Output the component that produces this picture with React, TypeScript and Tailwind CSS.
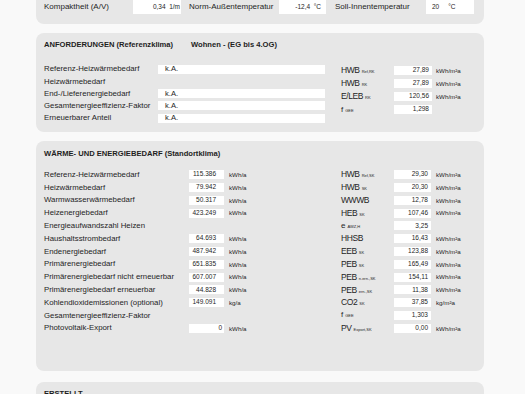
import React from "react";

type Sym = { main: string; sub?: string; small?: boolean };

const Symbol = ({ main, sub, small }: Sym) => (
  <span className="flex items-baseline leading-none">
    <span className={small ? "text-[8px]" : "text-[8.5px] tracking-[-0.4px]"}>{main}</span>
    {sub && <span className="text-[4px] ml-[2px]">{sub}</span>}
  </span>
);

const Box = ({ children, className }: { children?: React.ReactNode; className: string }) => (
  <div className={`bg-white h-[9px] flex items-center text-[6.5px] leading-none ${className}`}>{children}</div>
);

const reqLeft = [
  { label: "Referenz-Heizwärmebedarf", value: "k.A." },
  { label: "Heizwärmebedarf" },
  { label: "End-/Lieferenergiebedarf", value: "k.A." },
  { label: "Gesamtenergieeffizienz-Faktor", value: "k.A." },
  { label: "Erneuerbarer Anteil", value: "k.A." },
];

const reqRight = [
  { sym: { main: "HWB", sub: "Ref,RK" }, value: "27,89", unit: "kWh/m²a" },
  { sym: { main: "HWB", sub: "RK" }, value: "27,89", unit: "kWh/m²a" },
  { sym: { main: "E/LEB", sub: "RK" }, value: "120,56", unit: "kWh/m²a" },
  { sym: { main: "f", sub: "GEE", small: true }, value: "1,298" },
];

const demand = [
  { label: "Referenz-Heizwärmebedarf", value: "115.386", unit: "kWh/a", sym: { main: "HWB", sub: "Ref,SK" }, r: "29,30", ru: "kWh/m²a" },
  { label: "Heizwärmebedarf", value: "79.942", unit: "kWh/a", sym: { main: "HWB", sub: "SK" }, r: "20,30", ru: "kWh/m²a" },
  { label: "Warmwasserwärmebedarf", value: "50.317", unit: "kWh/a", sym: { main: "WWWB" }, r: "12,78", ru: "kWh/m²a" },
  { label: "Heizenergiebedarf", value: "423.249", unit: "kWh/a", sym: { main: "HEB", sub: "SK" }, r: "107,46", ru: "kWh/m²a" },
  { label: "Energieaufwandszahl Heizen", sym: { main: "e", sub: "AWZ,H", small: true }, r: "3,25" },
  { label: "Haushaltsstrombedarf", value: "64.693", unit: "kWh/a", sym: { main: "HHSB" }, r: "16,43", ru: "kWh/m²a" },
  { label: "Endenergiebedarf", value: "487.942", unit: "kWh/a", sym: { main: "EEB", sub: "SK" }, r: "123,88", ru: "kWh/m²a" },
  { label: "Primärenergiebedarf", value: "651.835", unit: "kWh/a", sym: { main: "PEB", sub: "SK" }, r: "165,49", ru: "kWh/m²a" },
  { label: "Primärenergiebedarf nicht erneuerbar", value: "607.007", unit: "kWh/a", sym: { main: "PEB", sub: "n.ern.,SK" }, r: "154,11", ru: "kWh/m²a" },
  { label: "Primärenergiebedarf erneuerbar", value: "44.828", unit: "kWh/a", sym: { main: "PEB", sub: "ern.,SK" }, r: "11,38", ru: "kWh/m²a" },
  { label: "Kohlendioxidemissionen (optional)", value: "149.091", unit: "kg/a", sym: { main: "CO2", sub: "SK" }, r: "37,85", ru: "kg/m²a" },
  { label: "Gesamtenergieeffizienz-Faktor", sym: { main: "f", sub: "GEE", small: true }, r: "1,303" },
  { label: "Photovoltaik-Export", value: "0", unit: "kWh/a", sym: { main: "PV", sub: "Export,SK" }, r: "0,00", ru: "kWh/m²a", pv: true },
];

export default function App() {
  return (
    <div className="h-[394px] overflow-hidden bg-[#f9f9f9] text-[#1e1e1e] font-['Liberation_Sans',Arial,sans-serif]">
      <div className="w-[448px] ml-[36px] flex flex-col">
        {/* top: building data (cut off) */}
        <div className="bg-[#e7e7e7] rounded-b-[8px] pl-[8px] pb-[10px]">
          <div className="flex items-center h-[14px] text-[8px]">
            <span className="w-[89px]">Kompaktheit (A/V)</span>
            <div className="w-[48px] h-[14px] bg-white flex items-center justify-end pr-[1px] text-[6.5px]">0,34&nbsp;&nbsp;1/m</div>
            <span className="w-[90px] ml-[8px]">Norm-Außentemperatur</span>
            <div className="w-[47px] h-[14px] bg-white flex items-center justify-end pr-[5px] text-[6.5px]">-12,4&nbsp;&nbsp;°C</div>
            <span className="w-[91px] ml-[9px]">Soll-Innentemperatur</span>
            <div className="w-[48px] h-[14px] bg-white flex items-center pl-[6px] gap-[9px] text-[6.5px]">
              <span>20</span>
              <span>°C</span>
            </div>
          </div>
        </div>

        {/* Anforderungen */}
        <div className="mt-[9px] bg-[#e7e7e7] rounded-[8px] pl-[8px] pt-[7px] pb-[8px]">
          <div className="flex items-center h-[10px] text-[7.6px] font-bold">
            <span className="w-[147px]">ANFORDERUNGEN (Referenzklima)</span>
            <span>Wohnen - (EG bis 4.OG)</span>
          </div>
          <div className="flex mt-[13px]">
            <div className="w-[281px] flex flex-col">
              {reqLeft.map((r) => (
                <div key={r.label} className="flex items-center h-[12.25px] text-[7.8px]">
                  <span className="w-[114px]">{r.label}</span>
                  {r.value && <Box className="w-[167px] pl-[7px] text-[7.6px]">{r.value}</Box>}
                </div>
              ))}
            </div>
            <div className="ml-[16px] flex flex-col pt-[1px]">
              {reqRight.map((r, i) => (
                <div key={i} className="flex items-center h-[13px]">
                  <span className="w-[53px]"><Symbol {...r.sym} /></span>
                  <Box className="w-[38px] justify-end pr-[3px]">{r.value}</Box>
                  {r.unit && <span className="ml-[4px] text-[6.2px]">{r.unit}</span>}
                </div>
              ))}
            </div>
          </div>
        </div>

        {/* Wärme- und Energiebedarf */}
        <div className="mt-[9px] bg-[#e7e7e7] rounded-[8px] pl-[8px] pt-[7px] pb-[36px]">
          <div className="flex items-center h-[10px] text-[7.6px] font-bold">WÄRME- UND ENERGIEBEDARF (Standortklima)</div>
          <div className="flex flex-col mt-[10px]">
            {demand.map((d) => (
              <div key={d.label} className="flex items-center h-[12.8px]">
                <span className="w-[145px] text-[7.8px]">{d.label}</span>
                <div className="w-[34px]">
                  {d.value && <Box className={`w-[35px] justify-end ${d.pv ? "pr-[2px]" : "pr-[8px]"}`}>{d.value}</Box>}
                </div>
                <span className="w-[118px] pl-[6px] text-[6.2px]">{d.unit}</span>
                <span className="w-[53px]"><Symbol {...d.sym} /></span>
                <Box className="w-[37px] justify-end pr-[3px]">{d.r}</Box>
                {d.ru && <span className="ml-[5px] text-[6.2px]">{d.ru}</span>}
              </div>
            ))}
          </div>
        </div>

        {/* Erstellt */}
        <div className="mt-[11px] bg-[#e7e7e7] rounded-t-[8px] pl-[8px] pt-[7px] h-[40px]">
          <div className="flex items-center h-[10px] text-[7.6px] font-bold">ERSTELLT</div>
        </div>
      </div>
    </div>
  );
}
